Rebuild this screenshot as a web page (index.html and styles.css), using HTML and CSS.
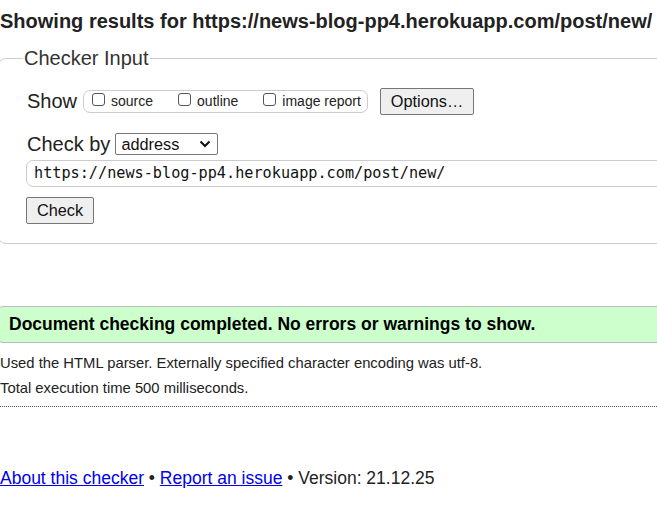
FILE: index.html
```html
<!DOCTYPE html>
<html>
<head>
<meta charset="utf-8">
<link rel="stylesheet" href="styles.css">
</head>
<body>
<h2 class="title">Showing results for https://news-blog-pp4.herokuapp.com/post/new/</h2>
<fieldset class="inputs">
  <legend class="legend">Checker Input</legend>
  <div class="row show-row">
    <span class="label">Show</span>
    <span class="opts">
      <label class="opt"><span class="cb"></span>source</label>
      <label class="opt"><span class="cb"></span>outline</label>
      <label class="opt"><span class="cb"></span>image report</label>
    </span>
    <span class="btn options">Options…</span>
  </div>
  <div class="row by-row">
    <span class="label">Check by</span>
    <span class="select">address<svg class="chev" width="12" height="8" viewBox="0 0 12 8"><path d="M1.5 1.5 L6 6 L10.5 1.5" fill="none" stroke="#111" stroke-width="2"/></svg></span>
  </div>
  <div class="url">https://news-blog-pp4.herokuapp.com/post/new/</div>
  <span class="btn check">Check</span>
</fieldset>
<div class="success">Document checking completed. No errors or warnings to show.</div>
<p class="details">Used the HTML parser. Externally specified character encoding was utf-8.</p>
<p class="details">Total execution time 500 milliseconds.</p>
<hr class="rule">
<p class="footer"><a href="#">About this checker</a> • <a href="#">Report an issue</a> • Version: 21.12.25</p>
</body>
</html>
```
FILE: styles.css
```css
html, body {
  margin: 0;
  padding: 0;
  background: #fff;
  overflow: hidden;
}
body {
  font-family: "Liberation Sans", Arial, sans-serif;
  color: #222;
  width: 657px;
}
.title {
  font-size: 20px;
  font-weight: bold;
  margin: 0;
  padding-top: 10px;
  line-height: 23px;
  color: #222;
  white-space: nowrap;
}
.inputs {
  margin: 14px 0 0 -3px;
  padding: 0 0 17px 29px;
  border: 1px solid #ccc;
  border-radius: 9px;
  width: 700px;
  box-sizing: border-box;
  height: 197px;
}
.legend {
  font-size: 20px;
  color: #333;
  padding: 0 1px;
  margin-left: -4px;
  line-height: 22px;
}
.row {
  display: flex;
  align-items: center;
}
.label {
  font-size: 20px;
  color: #222;
}
.show-row {
  margin-top: 18px;
  height: 28px;
}
.opts {
  display: inline-flex;
  align-items: center;
  margin-left: 6px;
  border: 1px solid #ccc;
  border-radius: 7px;
  height: 23px;
  padding: 0 0 0 8px;
  width: 285px;
  box-sizing: border-box;
}
.opt {
  display: inline-flex;
  align-items: flex-end;
  font-size: 14px;
  color: #222;
  margin-right: 25px;
}
.opt:last-child { margin-right: 0; }
.cb {
  width: 13px;
  height: 13px;
  border: 1px solid #555;
  border-radius: 3px;
  margin-right: 6px;
  margin-bottom: 3px;
  box-sizing: border-box;
}
.btn {
  display: inline-block;
  background: #efefef;
  border: 1px solid #767676;
  border-radius: 2px;
  font-size: 16.3px;
  color: #111;
  box-sizing: border-box;
  text-align: center;
}
.options {
  margin-left: 12px;
  width: 94px;
  height: 27px;
  line-height: 25px;
}
.by-row {
  margin-top: 17px;
  height: 24px;
}
.select {
  display: inline-flex;
  align-items: center;
  justify-content: space-between;
  margin-left: 5px;
  width: 103px;
  height: 22px;
  border: 1px solid #767676;
  border-radius: 2px;
  box-sizing: border-box;
  padding: 0 6px 0 5px;
  font-size: 16.3px;
  color: #111;
}
.url {
  margin-top: 4px;
  margin-left: -1px;
  height: 27px;
  border: 1px solid #ccc;
  border-radius: 7px;
  box-sizing: border-box;
  font-family: "DejaVu Sans Mono", "Liberation Mono", monospace;
  font-size: 15.2px;
  line-height: 25px;
  padding-left: 7px;
  color: #111;
}
.check {
  margin-top: 10px;
  margin-left: -1px;
  width: 68px;
  height: 27px;
  line-height: 25px;
}
.success {
  margin: 62px 0 0 -3px;
  width: 700px;
  height: 37px;
  box-sizing: border-box;
  background: #ccffcc;
  border: 1px solid #bbb;
  border-radius: 6px;
  font-weight: bold;
  font-size: 17.5px;
  line-height: 35px;
  padding-left: 11px;
  color: #000;
}
.details {
  margin: 0;
  font-size: 14.8px;
  line-height: 25px;
  color: #222;
}
.success + .details { margin-top: 8px; }
.rule {
  margin: 5px 0 0 0;
  border: 0;
  border-top: 1px dotted #555;
  height: 0;
}
.footer {
  margin: 61px 0 0 0;
  font-size: 17.5px;
  color: #222;
}
.footer a {
  color: #0000ee;
}
```
